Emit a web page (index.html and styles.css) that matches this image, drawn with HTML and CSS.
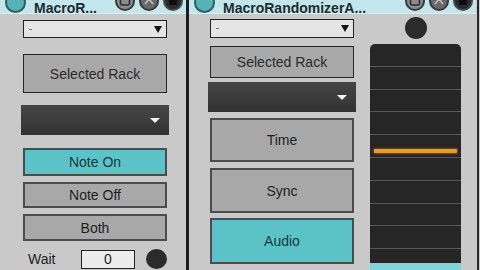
FILE: index.html
```html
<!DOCTYPE html>
<html lang="en">
<head>
    <meta charset="UTF-8">
    <meta name="viewport" content="width=device-width, initial-scale=1.0">
    <title>Macro Randomizer</title>
    <link rel="stylesheet" href="styles.css">
</head>
<body>
    <div class="rack">
        <section class="device device-left">
            <header class="titlebar">
                <span class="led"></span>
                <span class="title">MacroR...</span>
                <span class="icons">
                    <svg class="icon" viewBox="0 0 20 20"><circle cx="10" cy="10" r="9" fill="#8c8c8c" stroke="#3a3a3a" stroke-width="2"/><rect x="5.5" y="6" width="9" height="8" rx="2" fill="none" stroke="#2e2e2e" stroke-width="1.6"/></svg>
                    <svg class="icon" viewBox="0 0 20 20"><circle cx="10" cy="10" r="9" fill="#6a6a6a" stroke="#3a3a3a" stroke-width="2"/><path d="M6 13 L10 8 L14 13" fill="none" stroke="#bdbdbd" stroke-width="1.6"/></svg>
                    <svg class="icon" viewBox="0 0 20 20"><circle cx="10" cy="10" r="9" fill="#2a2a2a" stroke="#4a4a4a" stroke-width="2"/><rect x="6" y="5" width="8" height="9" fill="#0e0e0e"/></svg>
                </span>
            </header>
            <div class="controls">
                <div class="menu menu-light menu-first"><span class="dash"></span><span class="tri tri-dark"></span></div>
                <button class="btn btn-rack">Selected Rack</button>
                <div class="menu menu-dark"><span class="tri tri-light"></span></div>
                <button class="btn btn-active btn-note-on">Note On</button>
                <button class="btn btn-note">Note Off</button>
                <button class="btn btn-note btn-both">Both</button>
                <div class="wait-row">
                    <span class="wait-label">Wait</span>
                    <span class="numbox">0</span>
                    <span class="knob"></span>
                </div>
            </div>
        </section>

        <div class="divider"></div>

        <section class="device device-right">
            <header class="titlebar">
                <span class="led"></span>
                <span class="title">MacroRandomizerA...</span>
                <span class="icons">
                    <svg class="icon" viewBox="0 0 20 20"><circle cx="10" cy="10" r="9" fill="#8c8c8c" stroke="#3a3a3a" stroke-width="2"/><rect x="5.5" y="6" width="9" height="8" rx="2" fill="none" stroke="#2e2e2e" stroke-width="1.6"/></svg>
                    <svg class="icon" viewBox="0 0 20 20"><circle cx="10" cy="10" r="9" fill="#6a6a6a" stroke="#3a3a3a" stroke-width="2"/><path d="M6 13 L10 8 L14 13" fill="none" stroke="#bdbdbd" stroke-width="1.6"/></svg>
                    <svg class="icon" viewBox="0 0 20 20"><circle cx="10" cy="10" r="9" fill="#2a2a2a" stroke="#4a4a4a" stroke-width="2"/><rect x="6" y="5" width="8" height="9" fill="#0e0e0e"/></svg>
                </span>
            </header>
            <div class="columns">
                <div class="controls controls-right">
                    <div class="menu menu-light menu-first-r"><span class="dash"></span><span class="tri tri-dark"></span></div>
                    <button class="btn btn-rack btn-rack-r">Selected Rack</button>
                    <div class="menu menu-dark menu-dark-r"><span class="tri tri-light"></span></div>
                    <button class="btn btn-mode btn-time">Time</button>
                    <button class="btn btn-mode btn-sync">Sync</button>
                    <button class="btn btn-mode btn-active btn-audio">Audio</button>
                </div>
                <div class="meter-col">
                    <span class="knob knob-top"></span>
                    <div class="slider">
                        <span class="slider-value" style="top: 105px"></span>
                    </div>
                </div>
            </div>
        </section>

        <div class="edge"></div>
    </div>
</body>
</html>
```

FILE: styles.css
```css
body {
    margin: 0;
    font-family: "Liberation Sans", Arial, sans-serif;
    background-color: #cacaca;
}

.rack {
    display: flex;
    width: 480px;
    height: 270px;
    overflow: hidden;
    background-color: #cacaca;
}

.device {
    display: flex;
    flex-direction: column;
    background-color: #c9c9c9;
}

.device-left {
    width: 186px;
}

.device-right {
    width: 287px;
}

.divider {
    width: 3px;
    background-color: #1c1c1c;
}

.edge {
    width: 2px;
    margin-left: 1px;
    background-color: #2a2a2a;
}

/* title bar */
.titlebar {
    position: relative;
    z-index: 1;
    display: flex;
    align-items: flex-start;
    height: 13px;
    background-color: #c2e6ec;
    border-bottom: 1px solid #d8eef1;
}

.led {
    flex: none;
    width: 17px;
    height: 17px;
    margin: -8px 0 0 5px;
    border-radius: 50%;
    background-color: #55b2b6;
    border: 2px solid #2f5f61;
}

.title {
    margin-left: 8px;
    font-size: 14px;
    font-weight: bold;
    line-height: 16px;
    color: #1d2c2e;
    white-space: nowrap;
}

.icons {
    display: flex;
    gap: 4px;
    margin-left: auto;
    padding-right: 3px;
}

.icon {
    width: 20px;
    height: 20px;
    margin-top: -9px;
}

/* controls */
.controls {
    display: flex;
    flex-direction: column;
    width: 144px;
    padding-left: 23px;
}

.controls-right {
    padding-left: 21px;
}

.menu {
    position: relative;
    display: flex;
    align-items: center;
    box-sizing: border-box;
}

.menu-light {
    height: 18px;
    padding: 0 4px 0 5px;
    background-color: #e4e4e4;
    border: 1px solid #222;
}

.menu-first {
    margin-top: 6px;
}

.menu-first-r {
    margin-top: 5px;
    height: 19px;
}

.dash {
    width: 3px;
    height: 1px;
    background-color: #777;
}

.tri {
    margin-left: auto;
    width: 0;
    height: 0;
    border-left: 4px solid transparent;
    border-right: 4px solid transparent;
}

.tri-dark {
    border-top: 7px solid #111;
}

.tri-light {
    border-left-width: 5px;
    border-right-width: 5px;
    border-top: 5px solid #f2f2f2;
}

.menu-dark {
    height: 30px;
    margin: 12px -2px 0;
    padding-right: 9px;
    background: linear-gradient(#464646, #323232);
}

.menu-dark-r {
    margin-top: 4px;
}

.btn {
    box-sizing: border-box;
    padding: 0;
    font-family: inherit;
    font-size: 14px;
    color: #1e1e1e;
    background-color: #a8a8a8;
    border: 2px solid #4c4c4c;
}

.btn-rack {
    height: 39px;
    margin-top: 16px;
    border: 1px solid #262626;
    color: #2a2a2a;
}

.btn-rack-r {
    height: 32px;
    margin-top: 8px;
}

.btn-active {
    background-color: #5bc3c8;
    color: #163a3c;
}

.btn-note-on {
    height: 28px;
    margin-top: 13px;
}

.btn-note {
    height: 26px;
    margin-top: 6px;
}

.btn-both {
    height: 27px;
}

.btn-mode {
    height: 45px;
    margin-top: 6px;
}

.btn-time {
    height: 44px;
}

.btn-audio {
    height: 46px;
    margin-top: 5px;
}

.wait-row {
    display: flex;
    align-items: center;
    height: 20px;
    margin-top: 8px;
    font-size: 14px;
    color: #1e1e1e;
}

.wait-label {
    width: 53px;
    padding-left: 5px;
}

.numbox {
    box-sizing: border-box;
    width: 55px;
    height: 19px;
    line-height: 17px;
    text-align: center;
    background-color: #ececec;
    border: 1px solid #222;
}

.knob {
    width: 21px;
    height: 20px;
    margin-left: 11px;
    border-radius: 50%;
    background-color: #2b2b2b;
}

/* meter */
.columns {
    display: flex;
    flex: 1;
}

.meter-col {
    display: flex;
    flex-direction: column;
    align-items: center;
    width: 91px;
    margin-left: 16px;
}

.knob-top {
    width: 22px;
    height: 22px;
    margin: 3px 0 0;
}

.slider {
    position: relative;
    align-self: stretch;
    flex: 1;
    margin-top: 5px;
    border-radius: 5px 5px 0 0;
    border-bottom: 7px solid #7ed6da;
    background-color: #262626;
    background-image: repeating-linear-gradient(to bottom, transparent 0, transparent 21.8px, #585858 21.8px, #585858 22.8px);
}

.slider-value {
    position: absolute;
    left: 4px;
    right: 4px;
    height: 4px;
    border-radius: 1px;
    background-color: #e99b2c;
    box-shadow: 0 0 2px 1px #7a4a12;
}
```
